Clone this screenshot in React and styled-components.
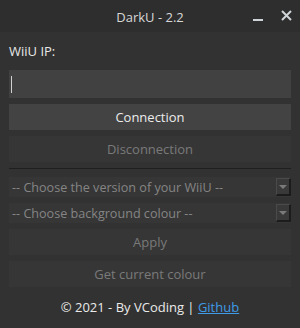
import styled, { createGlobalStyle } from "styled-components";

const GlobalStyle = createGlobalStyle`
    html, body {
        margin: 0;
        padding: 0;
        background: #323232;
    }
    * {
        box-sizing: border-box;
    }
`;

const App = () => {
    return (
        <>
            <GlobalStyle />
            <Window>
                <TitleBar>
                    <span />
                    <Title>DarkU - 2.2</Title>
                    <Controls>
                        <Minimize />
                        <Close>
                            <svg width="11" height="11" viewBox="0 0 11 11">
                                <path d="M1 1 L10 10 M10 1 L1 10" stroke="#cfd4d8" strokeWidth="2" />
                            </svg>
                        </Close>
                    </Controls>
                </TitleBar>

                <Body>
                    <Label>WiiU IP:</Label>
                    <Input>
                        <Caret />
                    </Input>
                    <Button>Connection</Button>
                    <Button disabled>Disconnection</Button>
                    <Separator />
                    <Combo>
                        <ComboText>-- Choose the version of your WiiU --</ComboText>
                        <Arrow />
                    </Combo>
                    <Combo>
                        <ComboText>-- Choose background colour --</ComboText>
                        <Arrow />
                    </Combo>
                    <Button disabled>Apply</Button>
                    <Button disabled>Get current colour</Button>
                    <Footer>
                        © 2021 - By VCoding | <Link href="#">Github</Link>
                    </Footer>
                </Body>
            </Window>
        </>
    );
};

const Window = styled.div`
    width: 300px;
    height: 328px;
    background: #323232;
    font-family: "Open Sans", "DejaVu Sans", sans-serif;
    font-size: 13px;
    color: #e6e6e6;
    display: flex;
    flex-direction: column;
`;

const TitleBar = styled.div`
    height: 32px;
    background: #2e2e2e;
    display: grid;
    grid-template-columns: 1fr auto 1fr;
    align-items: center;
`;

const Title = styled.span`
    font-size: 13px;
    color: #d8d8d8;
    padding-top: 1px;
`;

const Controls = styled.div`
    display: flex;
    justify-content: flex-end;
    align-items: center;
    gap: 18px;
    padding-right: 8px;
`;

const Minimize = styled.div`
    width: 10px;
    height: 2px;
    background: #cfd4d8;
    margin-top: 8px;
`;

const Close = styled.div`
    display: flex;
    margin-top: -2px;
`;

const Body = styled.div`
    flex: 1;
    display: flex;
    flex-direction: column;
    padding: 0 9px;
`;

const Label = styled.div`
    margin-top: 11px;
    line-height: 16px;
    color: #e8e8e8;
`;

const Input = styled.div`
    margin-top: 11px;
    height: 28px;
    background: #414141;
    display: flex;
    align-items: center;
    padding-left: 2px;
`;

const Caret = styled.div`
    width: 1px;
    height: 17px;
    background: #d0d0d0;
`;

const Button = styled.div`
    margin-top: 6px;
    height: 26px;
    display: flex;
    align-items: center;
    justify-content: center;
    background: ${(p) => (p.disabled ? "#363636" : "#434343")};
    color: ${(p) => (p.disabled ? "#7a7a7a" : "#ececec")};
`;

const Separator = styled.div`
    margin-top: 6px;
    height: 1px;
    background: #1f1f1f;
`;

const Combo = styled.div`
    margin-top: 8px;
    height: 20px;
    display: flex;
    align-items: center;
    background: #363636;

    & + & {
        margin-top: 6px;
    }
`;

const ComboText = styled.span`
    flex: 1;
    padding-left: 3px;
    font-size: 12.6px;
    color: #858585;
    white-space: nowrap;
`;

const Arrow = styled.div`
    width: 15px;
    height: 18px;
    border-top: 1px solid #4a4a4a;
    border-left: 1px solid #4a4a4a;
    border-right: 2px solid #1c1c1c;
    border-bottom: 2px solid #1c1c1c;
    background: #393939;
    display: flex;
    align-items: center;
    justify-content: center;

    &::after {
        content: "";
        border-left: 4px solid transparent;
        border-right: 4px solid transparent;
        border-top: 4px solid #7a7a7a;
    }
`;

const Footer = styled.div`
    flex: 1;
    display: flex;
    align-items: center;
    justify-content: center;
    white-space: pre;
    font-size: 13px;
    color: #eaeaea;
    padding-bottom: 2px;
`;

const Link = styled.a`
    color: #3f9be6;
    text-decoration: underline;
`;

export default App;
